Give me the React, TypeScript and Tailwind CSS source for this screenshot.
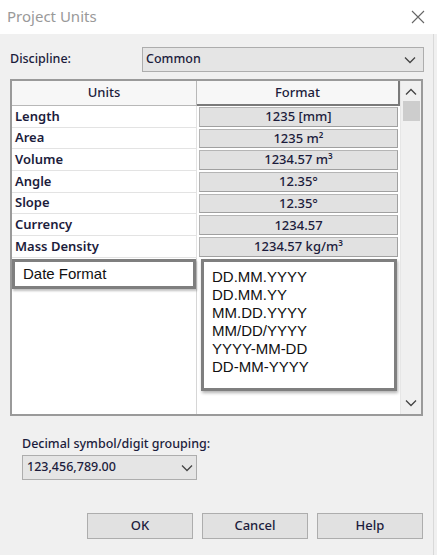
import React from "react";

const font = { fontFamily: '"Noto Sans", "Open Sans", sans-serif' };
const arial = { fontFamily: '"Liberation Sans", Arial, sans-serif' };

function Chevron({ className = "" }: { className?: string }) {
  return (
    <svg width="12" height="8" viewBox="0 0 12 8" className={className}>
      <path d="M1 1.5 L6 6.5 L11 1.5" fill="none" stroke="#444" strokeWidth="1.3" />
    </svg>
  );
}

const rows: [string, React.ReactNode][] = [
  ["Length", "1235 [mm]"],
  ["Area", "1235 m²"],
  ["Volume", "1234.57 m³"],
  ["Angle", "12.35°"],
  ["Slope", "12.35°"],
  ["Currency", "1234.57"],
  ["Mass Density", "1234.57 kg/m³"],
];

const dates = ["DD.MM.YYYY", "DD.MM.YY", "MM.DD.YYYY", "MM/DD/YYYY", "YYYY-MM-DD", "DD-MM-YYYY"];

export default function App() {
  return (
    <div className="w-[437px] h-[555px] bg-[#f0f0f0] flex flex-col text-[#1c1c3c]" style={font}>
      {/* Title bar */}
      <div className="h-[34px] bg-white flex items-center justify-between pl-[7px] pr-[12px] shrink-0">
        <span className="text-[15px] text-[#999999] -mt-[2px]">Project Units</span>
        <svg width="14" height="14" viewBox="0 0 14 14">
          <path d="M1 1 L13 13 M13 1 L1 13" stroke="#666" strokeWidth="1.1" />
        </svg>
      </div>

      <div className="flex-1 flex flex-col pl-[10px] pr-[10px] border-r border-[#d9d9d9] mr-[3px]">
        {/* Discipline */}
        <div className="flex items-center mt-[13px] h-[25px]">
          <span className="w-[132px] text-[12.5px] font-medium">Discipline:</span>
          <div className="flex-1 h-[25px] bg-[#e5e5e5] border border-[#adadad] flex items-center justify-between pl-[3px] pr-[7px] -mr-[1px]">
            <span className="text-[12.5px] font-medium">Common</span>
            <Chevron />
          </div>
        </div>

        {/* Table */}
        <div className="mt-[7px] h-[337px] border-2 border-[#9a9a9a] bg-white flex">
          <div className="flex-1 flex flex-col">
            {/* Header */}
            <div className="flex h-[25px] bg-[#f7f7f7]">
              <div className="w-[185px] border-r border-b border-[#b8b8b8] flex items-center justify-center text-[13px] font-medium">
                Units
              </div>
              <div className="flex-1 border-r-2 border-b-2 border-[#7a7a7a] flex items-center justify-center text-[13px] font-medium">
                Format
              </div>
            </div>
            {/* Rows */}
            {rows.map(([u, f]) => (
              <div key={u} className="flex h-[21.7px]">
                <div className="w-[185px] border-b border-r border-[#e3e3e3] flex items-center pl-[3px] text-[13px] font-semibold">
                  {u}
                </div>
                <div className="flex-1 p-[1px] pl-[2px] pr-[2px] flex">
                  <div className="flex-1 bg-[#e1e1e1] border border-[#b5b5b5] border-r-[#a0a0a0] border-b-[#a0a0a0] flex items-center justify-center text-[13px] font-medium">
                    {f}
                  </div>
                </div>
              </div>
            ))}
            {/* Lower area */}
            <div className="flex-1 flex">
              <div className="w-[185px] border-r border-[#d6d6d6] pt-[1px] flex flex-col">
                <div
                  className="h-[30px] border-[3px] border-[#7f7f7f] bg-white flex items-center pl-[8px] text-[15px] text-[#111] shadow-[1px_2px_2px_rgba(0,0,0,0.25)]"
                  style={arial}
                >
                  Date Format
                </div>
              </div>
              <div className="flex-1 pt-[1px] pl-[4px] pr-[3px] flex flex-col">
                <div
                  className="h-[132px] border-[3px] border-[#7f7f7f] bg-white flex flex-col justify-center pl-[8px] pb-[6px] text-[15px] leading-[18px] text-[#111] shadow-[1px_2px_3px_rgba(0,0,0,0.3)]"
                  style={arial}
                >
                  {dates.map((d) => (
                    <div key={d}>{d}</div>
                  ))}
                </div>
              </div>
            </div>
          </div>
          {/* Scrollbar */}
          <div className="w-[21px] bg-[#f0f0f0] flex flex-col items-center border-l border-[#e6e6e6]">
            <div className="h-[19px] flex items-center justify-center pt-[3px]">
              <Chevron className="rotate-180" />
            </div>
            <div className="w-[17px] h-[20px] bg-[#cdcdcd] mt-[1px]" />
            <div className="flex-1" />
            <div className="h-[19px] flex items-center justify-center pb-[4px]">
              <Chevron />
            </div>
          </div>
        </div>

        {/* Decimal */}
        <div className="pl-[12px] mt-[20px] flex flex-col">
          <span className="text-[12.5px] leading-[16px] font-medium">Decimal symbol/digit grouping:</span>
          <div className="mt-[3px] w-[175px] h-[25px] bg-[#e5e5e5] border border-[#adadad] flex items-center justify-between pl-[4px] pr-[3px]">
            <span className="text-[12.5px] font-medium">123,456,789.00</span>
            <Chevron />
          </div>
        </div>

        {/* Buttons */}
        <div className="mt-[33px] flex justify-end gap-[9px]">
          {["OK", "Cancel", "Help"].map((b) => (
            <div
              key={b}
              className="w-[106px] h-[26px] bg-[#e1e1e1] border border-[#adadad] flex items-center justify-center text-[13px] font-medium"
            >
              {b}
            </div>
          ))}
        </div>
      </div>
    </div>
  );
}
